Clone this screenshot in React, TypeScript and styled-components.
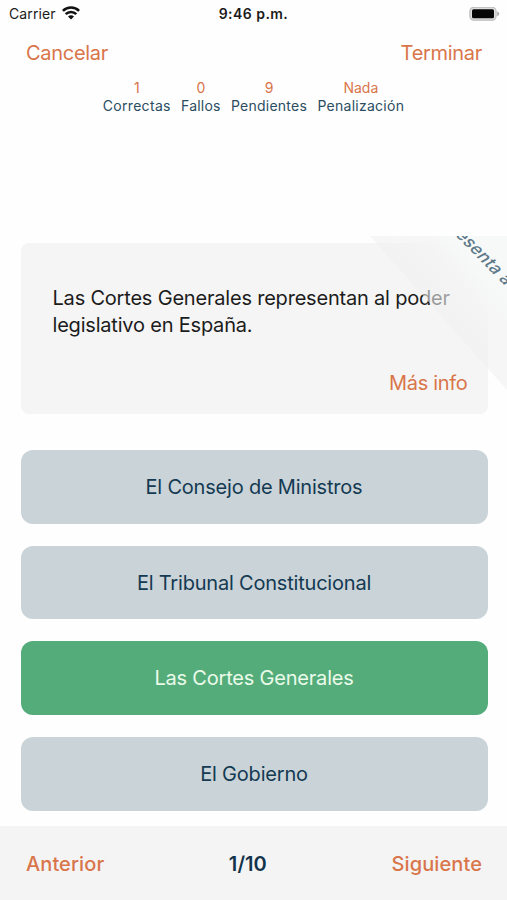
import React from "react";
import styled, { createGlobalStyle } from "styled-components";

const orange = "#d9754a";
const navy = "#143a52";

const GlobalStyle = createGlobalStyle`
  * { box-sizing: border-box; }
  body { margin: 0; background: #fefefe; font-family: Inter, "Liberation Sans", sans-serif; }
  button { font-family: inherit; border: 0; padding: 0; background: none; }
`;

const Screen = styled.div`
  width: 507px;
  height: 900px;
  display: flex;
  flex-direction: column;
  overflow: hidden;
`;

const StatusBar = styled.header`
  height: 28px;
  display: grid;
  grid-template-columns: 1fr auto 1fr;
  align-items: center;
  padding: 0 7px 0 9px;
  color: #1b1b1b;
  line-height: 28px;
`;

const Carrier = styled.div`
  display: flex;
  align-items: center;
  gap: 6px;
  font-size: 14px;
  letter-spacing: 0.12px;
`;

const WifiIcon = styled.svg`
  margin-top: -2px;
`;

const Time = styled.time`
  font-size: 14px;
  font-weight: 600;
  letter-spacing: 0.45px;
  margin-right: 2px;
`;

const Battery = styled.svg`
  justify-self: end;
`;

const NavBar = styled.nav`
  height: 50px;
  display: flex;
  justify-content: space-between;
  align-items: center;
  padding: 0 25px 0 26px;
`;

const TextButton = styled.button<{ $spacing?: number; $strong?: boolean }>`
  color: ${orange};
  font-size: 20px;
  line-height: 26px;
  font-weight: ${(p) => (p.$strong ? 500 : 400)};
  letter-spacing: ${(p) => p.$spacing ?? -0.3}px;
`;

const Stats = styled.dl`
  margin: 1px 0 0;
  display: flex;
  justify-content: center;
  gap: 10.3px;
  height: 157px;
`;

const Stat = styled.div`
  display: flex;
  flex-direction: column-reverse;
  align-self: flex-start;
  align-items: center;
  font-size: 14px;
  line-height: 18px;
`;

const StatLabel = styled.dt<{ $spacing: number }>`
  color: #2b4d61;
  letter-spacing: ${(p) => p.$spacing}px;
`;

const StatValue = styled.dd`
  margin: 0;
  color: ${orange};
`;

const QuestionArea = styled.section`
  position: relative;
  height: 214px;
  padding: 7px 19.5px 0 20.5px;
`;

const QuestionCard = styled.article`
  height: 171px;
  border-radius: 8px;
  background: #f5f5f5;
  padding: 42px 20px 0 32px;
  display: flex;
  flex-direction: column;
`;

const Question = styled.p`
  margin: 0;
  flex: 0 0 85px;
  white-space: nowrap;
  color: #1c1c1c;
  font-size: 20px;
  line-height: 27px;
  letter-spacing: -0.2px;
`;

const MoreInfo = styled(TextButton)`
  align-self: flex-end;
`;

const Peel = styled.svg`
  position: absolute;
  top: 0;
  right: 0;
`;

const Answers = styled.main`
  flex: 1;
  display: flex;
  flex-direction: column;
  gap: 22px;
  padding: 0 19.5px 0 20.5px;
`;

const Answer = styled.button<{ $correct?: boolean }>`
  flex: 0 0 73.7px;
  border-radius: 12px;
  background: ${(p) => (p.$correct ? "#55ac7b" : "#cad3d8")};
  color: ${(p) => (p.$correct ? "#eafbe9" : navy)};
  font-size: 20px;
  letter-spacing: -0.2px;
`;

const Footer = styled.footer`
  height: 74px;
  background: #f4f4f4;
  display: flex;
  justify-content: space-between;
  align-items: center;
  padding: 1px 25px 0 26px;
`;

const Counter = styled.span`
  color: #12334b;
  font-size: 20px;
  font-weight: 600;
  letter-spacing: 0.1px;
`;

const stats = [
  { label: "Correctas", value: "1", spacing: 0.31 },
  { label: "Fallos", value: "0", spacing: 0.2 },
  { label: "Pendientes", value: "9", spacing: 0.25 },
  { label: "Penalización", value: "Nada", spacing: 0.27 },
];

const answers = [
  { text: "El Consejo de Ministros" },
  { text: "El Tribunal Constitucional" },
  { text: "Las Cortes Generales", correct: true },
  { text: "El Gobierno" },
];

export default function App() {
  return (
    <>
      <GlobalStyle />
      <Screen>
        <StatusBar>
          <Carrier>
            Carrier
            <WifiIcon width="18" height="14" viewBox="0 0 18 14" fill="none" stroke="#111" strokeWidth="2.6">
              <path d="M0.9 4.9C5.4 0.4 12.6 0.4 17.1 4.9" />
              <path d="M3.7 8.1C6.6 5.2 11.4 5.2 14.3 8.1" />
              <path d="M6 10.4C7.8 8.8 10.2 8.8 12 10.4L9 13.5Z" fill="#111" stroke="none" />
            </WifiIcon>
          </Carrier>
          <Time>9:46 p.m.</Time>
          <Battery width="31" height="15" viewBox="0 0 31 15">
            <rect x="0.9" y="0.3" width="26.2" height="12.8" rx="3.8" fill="#dedede" stroke="#b9b9b9" strokeWidth="1.1" />
            <rect x="3" y="2.2" width="22" height="9" rx="1.5" fill="#050505" />
            <path d="M28.2 4.5Q30.2 5 30.2 6.8T28.2 9.2Z" fill="#aaa" />
          </Battery>
        </StatusBar>
        <NavBar>
          <TextButton>Cancelar</TextButton>
          <TextButton>Terminar</TextButton>
        </NavBar>
        <Stats>
          {stats.map((s) => (
            <Stat key={s.label}>
              <StatLabel $spacing={s.spacing}>{s.label}</StatLabel>
              <StatValue>{s.value}</StatValue>
            </Stat>
          ))}
        </Stats>
        <QuestionArea>
          <QuestionCard>
            <Question>
              Las Cortes Generales representan al poder
              <br />
              legislativo en España.
            </Question>
            <MoreInfo>Más info</MoreInfo>
          </QuestionCard>
          <Peel width="137" height="156" viewBox="0 0 137 156">
            <defs>
              <linearGradient id="fold" gradientUnits="userSpaceOnUse" x1="48" y1="64" x2="98" y2="20">
                <stop offset="0" stopColor="#efefef" stopOpacity="0.55" />
                <stop offset="0.4" stopColor="#f2f2f2" stopOpacity="0.62" />
                <stop offset="0.7" stopColor="#f5f5f5" stopOpacity="0.9" />
                <stop offset="1" stopColor="#f7f8f8" />
              </linearGradient>
            </defs>
            <path d="M0 0H137V154Z" fill="url(#fold)" />
            <text
              transform="translate(80 -6) rotate(45.5) skewX(-16)"
              fill="#5d7989"
              fontSize="17"
              fontWeight="500"
              letterSpacing="0.35"
            >
              resenta a
            </text>
          </Peel>
        </QuestionArea>
        <Answers>
          {answers.map((a) => (
            <Answer key={a.text} $correct={a.correct}>
              {a.text}
            </Answer>
          ))}
        </Answers>
        <Footer>
          <TextButton $strong $spacing={0.1}>Anterior</TextButton>
          <Counter>1/10</Counter>
          <TextButton $strong $spacing={0.1}>Siguiente</TextButton>
        </Footer>
      </Screen>
    </>
  );
}
